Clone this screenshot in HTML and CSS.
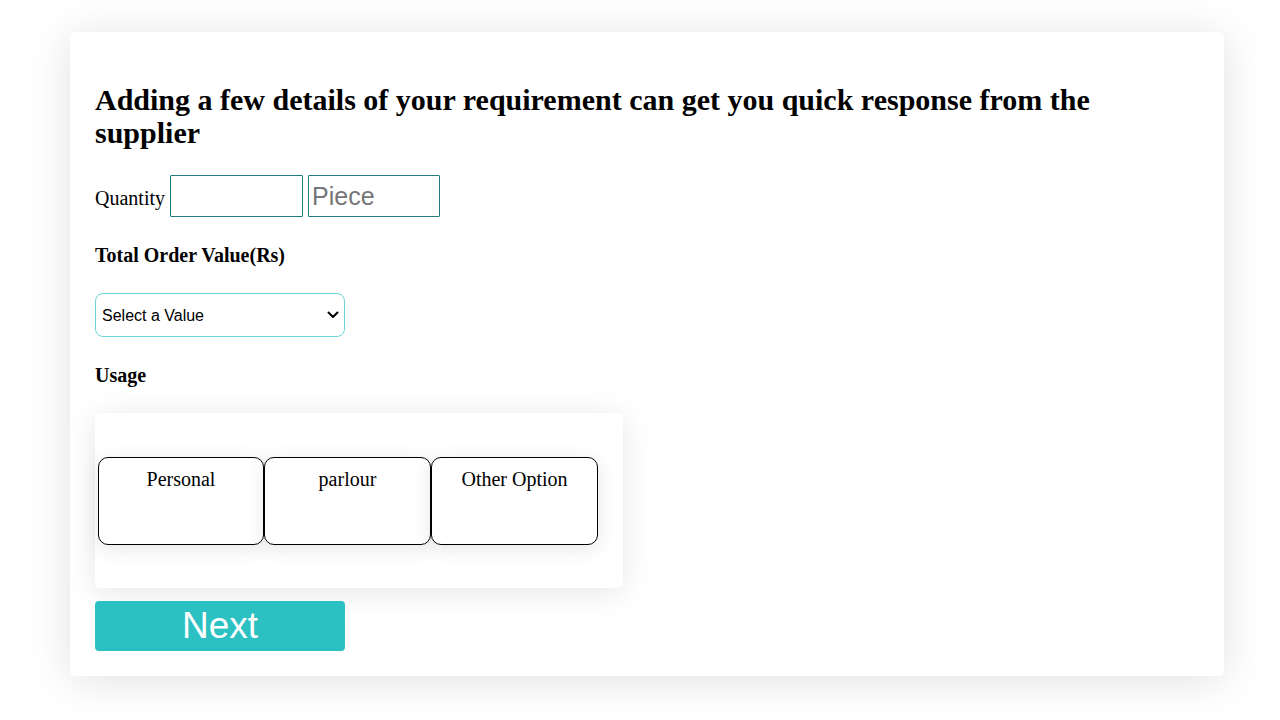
FILE: index.html
```html
<!DOCTYPE html>
<html lang="en">
<head>
<meta charset="utf-8">
<title>Requirement details</title>
<link rel="stylesheet" href="styles.css">
</head>
<body>
<div class="card">
  <h2 class="title">Adding a few details of your requirement can get you quick response from the supplier</h2>
  <div class="qty-row">
    <label class="qty-label">Quantity</label>
    <input class="qty-input" type="text">
    <input class="qty-input unit" type="text" placeholder="Piece">
  </div>
  <h4 class="field-label">Total Order Value(Rs)</h4>
  <div class="select-wrap">
    <select class="value-select">
      <option>Select a Value</option>
    </select>
    <svg class="chevron" width="12" height="8" viewBox="0 0 12 8" aria-hidden="true">
      <path d="M1.5 1.5 L6 6 L10.5 1.5" fill="none" stroke="#000" stroke-width="2" stroke-linecap="round" stroke-linejoin="round"/>
    </svg>
  </div>
  <h4 class="field-label">Usage</h4>
  <div class="usage-box">
    <div class="option">Personal</div>
    <div class="option">parlour</div>
    <div class="option">Other Option</div>
  </div>
  <button class="next-btn">Next</button>
</div>
</body>
</html>
```
FILE: styles.css
```css
html, body {
  margin: 0;
  padding: 0;
  background: #ffffff;
}
body {
  font-family: "Liberation Serif", "Times New Roman", serif;
  color: #000;
  padding-top: 32px;
  padding-bottom: 44px;
}
.card {
  margin-left: 70px;
  width: 1154px;
  box-sizing: border-box;
  padding: 25px 25px 25px 25px;
  background: #fff;
  border-radius: 5px;
  box-shadow: 0 4px 44px rgba(0, 0, 0, 0.12);
  display: flex;
  flex-direction: column;
  align-items: flex-start;
}
.title {
  margin: 26px 0 0 0;
  font-size: 30px;
  line-height: 33px;
  font-weight: bold;
  width: 1050px;
}
.qty-row {
  margin-top: 26px;
  display: flex;
  align-items: baseline;
  gap: 5px;
}
.qty-label {
  font-size: 20px;
}
.qty-input {
  box-sizing: border-box;
  width: 133px;
  height: 42px;
  border: 1px solid #1f7f80;
  border-radius: 1px;
  padding: 0 3px;
  font-family: "Liberation Sans", Arial, sans-serif;
  font-size: 25px;
  outline: none;
}
.qty-input.unit {
  width: 132px;
}
.qty-input::placeholder {
  color: #767676;
}
.field-label {
  margin: 27px 0 0 0;
  font-size: 20px;
  line-height: 23px;
  font-weight: bold;
}
.select-wrap {
  margin-top: 26px;
  position: relative;
  width: 250px;
  height: 44px;
}
.value-select {
  -webkit-appearance: none;
  appearance: none;
  box-sizing: border-box;
  width: 250px;
  height: 44px;
  border: 1px solid #6fd3d3;
  border-radius: 8px;
  padding: 0 6px;
  background: #fff;
  font-family: "Liberation Sans", Arial, sans-serif;
  font-size: 16px;
  color: #000;
  outline: none;
}
.chevron {
  position: absolute;
  left: 232px;
  top: 18px;
  pointer-events: none;
}
.select-wrap + .field-label {
  margin-top: 27px;
}
.usage-box {
  margin-top: 26px;
  box-sizing: border-box;
  width: 528px;
  height: 175px;
  padding: 44px 25px 43px 3px;
  background: #fff;
  border-radius: 5px;
  box-shadow: 0 4px 30px rgba(0, 0, 0, 0.1);
  display: flex;
}
.option {
  box-sizing: border-box;
  width: 167px;
  height: 88px;
  border: 1px solid #000;
  border-radius: 10px;
  background: #fff;
  box-shadow: 0 4px 20px rgba(0, 0, 0, 0.1);
  text-align: center;
  font-size: 20px;
  line-height: 23px;
  padding-top: 10px;
}
.option:first-child {
  width: 166px;
}
.next-btn {
  margin-top: 13px;
  width: 250px;
  height: 50px;
  border: none;
  border-radius: 4px;
  background: #2bc1c2;
  color: #fff;
  font-family: "Liberation Sans", Arial, sans-serif;
  font-size: 37px;
  padding: 0;
  cursor: pointer;
}
```
